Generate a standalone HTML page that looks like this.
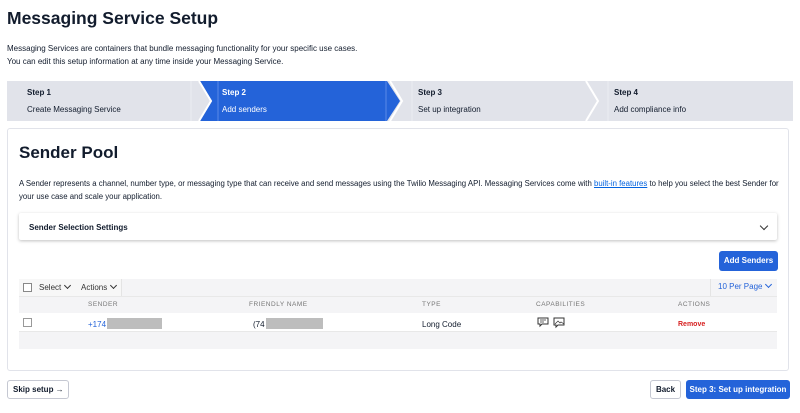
<!DOCTYPE html>
<html><head><style>
*{margin:0;padding:0;box-sizing:border-box}
body{width:800px;height:413px;background:#fff;font-family:"Liberation Sans",sans-serif;color:#121c2d;position:relative;overflow:hidden}
.a{position:absolute;white-space:nowrap}
.s{font-size:8px}
.c{display:inline-block;width:5px;height:5px;border-right:1px solid currentColor;border-bottom:1px solid currentColor;transform:rotate(45deg);margin-left:4px;position:relative;top:-2px}
</style></head><body>
<div class="a" style="left:7px;top:8px;font-size:17.5px;font-weight:bold">Messaging Service Setup</div>
<div class="a s" style="left:7px;top:44px">Messaging Services are containers that bundle messaging functionality for your specific use cases.</div>
<div class="a s" style="left:7px;top:57px">You can edit this setup information at any time inside your Messaging Service.</div>
<svg class="a" style="left:0;top:81px" width="800" height="40">
<rect x="7" y="0" width="786" height="40" fill="#e1e3ea"/>
<polygon points="200,0 387,0 400,20 387,40 200,40 212,20" fill="#2463d9"/>
<polyline points="199,0 211,20 199,40" fill="none" stroke="#fff" stroke-width="2"/>
<polyline points="390,0 402,20 390,40" fill="none" stroke="#fff" stroke-width="2"/>
<polyline points="586,0 598,20 586,40" fill="none" stroke="#fff" stroke-width="2"/>
<line x1="191" y1="0" x2="191" y2="40" stroke="#eceef2"/>
<line x1="218" y1="0" x2="218" y2="40" stroke="#5a8ae6"/>
<line x1="386" y1="0" x2="386" y2="40" stroke="#5a8ae6"/>
<line x1="412" y1="0" x2="412" y2="40" stroke="#eceef2"/>
<line x1="608" y1="0" x2="608" y2="40" stroke="#eceef2"/>
</svg>
<div class="a s" style="left:27px;top:88px;font-weight:bold">Step 1</div>
<div class="a s" style="left:27px;top:105px">Create Messaging Service</div>
<div class="a s" style="left:222px;top:88px;font-weight:bold;color:#fff">Step 2</div>
<div class="a s" style="left:222px;top:105px;color:#fff">Add senders</div>
<div class="a s" style="left:418px;top:88px;font-weight:bold">Step 3</div>
<div class="a s" style="left:418px;top:105px">Set up integration</div>
<div class="a s" style="left:614px;top:88px;font-weight:bold">Step 4</div>
<div class="a s" style="left:614px;top:105px">Add compliance info</div>

<div class="a" style="left:7px;top:128px;width:782px;height:243px;border:1px solid #e1e3ea;border-radius:3px"></div>
<div class="a" style="left:19px;top:143px;font-size:17px;font-weight:bold">Sender Pool</div>
<div class="a" style="left:19px;top:179px;font-size:7.8px">A Sender represents a channel, number type, or messaging type that can receive and send messages using the Twilio Messaging API. Messaging Services come with <span style="color:#0263e0;text-decoration:underline">built-in features</span> to help you select the best Sender for</div>
<div class="a" style="left:19px;top:192px;font-size:7.8px">your use case and scale your application.</div>
<div class="a" style="left:19px;top:213px;width:758px;height:27px;box-shadow:0 1px 3px rgba(0,0,0,.25);border-radius:2px"></div>
<div class="a s" style="left:29px;top:223px;font-weight:bold">Sender Selection Settings</div>
<div class="a" style="left:761px;top:223px;width:6px;height:6px;border-right:1px solid #333;border-bottom:1px solid #333;transform:rotate(45deg)"></div>
<div class="a" style="left:719px;top:251px;width:59px;height:20px;background:#2463d9;border-radius:3px;color:#fff;font-size:8px;font-weight:bold;text-align:center;line-height:20px">Add Senders</div>

<div class="a" style="left:19px;top:279px;width:758px;height:17px;background:#f4f4f6"></div>
<div class="a" style="left:19px;top:279px;width:103px;height:17px;background:#f7f7f7;border-right:1px solid #e4e4e4"></div>
<div class="a" style="left:23px;top:283px;width:9px;height:9px;border:1px solid #888;background:#fff"></div>
<div class="a s" style="left:39px;top:283px;color:#333">Select<span class="c"></span></div>
<div class="a s" style="left:81px;top:283px;color:#333">Actions<span class="c"></span></div>
<div class="a s" style="left:718px;top:282px;color:#2463d9">10 Per Page<span class="c"></span></div>
<div class="a" style="left:710px;top:279px;width:1px;height:17px;background:#e4e4e4"></div>
<div class="a" style="left:19px;top:296px;width:758px;height:17px;background:#f4f4f6;border-top:1px solid #e8e8e8"></div>
<div class="a" style="left:88px;top:301px;font-size:6.5px;color:#777;letter-spacing:.5px">SENDER</div>
<div class="a" style="left:249px;top:301px;font-size:6.5px;color:#777;letter-spacing:.5px">FRIENDLY NAME</div>
<div class="a" style="left:422px;top:301px;font-size:6.5px;color:#777;letter-spacing:.5px">TYPE</div>
<div class="a" style="left:536px;top:301px;font-size:6.5px;color:#777;letter-spacing:.5px">CAPABILITIES</div>
<div class="a" style="left:678px;top:301px;font-size:6.5px;color:#777;letter-spacing:.5px">ACTIONS</div>
<div class="a" style="left:23px;top:318px;width:9px;height:9px;border:1px solid #999"></div>
<div class="a s" style="left:88px;top:320px;color:#2463d9">+174</div>
<div class="a" style="left:107px;top:318px;width:55px;height:11px;background:#bdbdbd"></div>
<div class="a s" style="left:253px;top:320px">(74</div>
<div class="a" style="left:266px;top:318px;width:57px;height:11px;background:#bdbdbd"></div>
<div class="a s" style="left:422px;top:320px">Long Code</div>
<svg class="a" style="left:537px;top:317px" width="32" height="12"><path d="M1 1h10v6H5l-2 2V7H1z" fill="none" stroke="#333"/><path d="M3 3h6M3 5h4" stroke="#333" stroke-width=".7"/><path d="M17 1h10v7H21l-2 2V8h-2z" fill="none" stroke="#333"/><path d="M18 7l3-3 2 2 1-1 3 2" fill="none" stroke="#333" stroke-width=".7"/></svg>
<div class="a s" style="left:678px;top:321px;color:#d61f1f;font-weight:bold;font-size:7px">Remove</div>
<div class="a" style="left:19px;top:331px;width:758px;height:18px;background:#f4f4f6;border-top:1px solid #e8e8e8"></div>

<div class="a" style="left:7px;top:380px;width:62px;height:19px;border:1px solid #c5c8d2;border-radius:3px;font-size:8px;font-weight:bold;line-height:17px;padding-left:5px">Skip setup &rarr;</div>
<div class="a" style="left:650px;top:380px;width:31px;height:19px;border:1px solid #c5c8d2;border-radius:3px;font-size:8px;font-weight:bold;line-height:17px;text-align:center">Back</div>
<div class="a" style="left:686px;top:380px;width:104px;height:19px;background:#2463d9;border-radius:3px;font-size:8px;font-weight:bold;line-height:19px;text-align:center;color:#fff">Step 3: Set up integration</div>
</body></html>
